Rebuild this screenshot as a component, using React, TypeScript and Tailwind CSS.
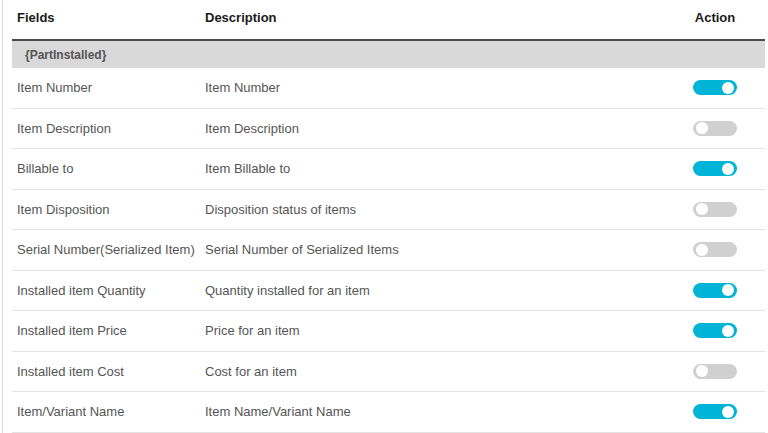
import { useState } from 'react'

type Row = { field: string; description: string; on: boolean }

const ROWS: Row[] = [
  { field: 'Item Number', description: 'Item Number', on: true },
  { field: 'Item Description', description: 'Item Description', on: false },
  { field: 'Billable to', description: 'Item Billable to', on: true },
  { field: 'Item Disposition', description: 'Disposition status of items', on: false },
  { field: 'Serial Number(Serialized Item)', description: 'Serial Number of Serialized Items', on: false },
  { field: 'Installed item Quantity', description: 'Quantity installed for an item', on: true },
  { field: 'Installed item Price', description: 'Price for an item', on: true },
  { field: 'Installed item Cost', description: 'Cost for an item', on: false },
  { field: 'Item/Variant Name', description: 'Item Name/Variant Name', on: true },
]

export default function App() {
  const [rows, setRows] = useState(ROWS)

  const toggle = (i: number) =>
    setRows((prev) => prev.map((r, j) => (j === i ? { ...r, on: !r.on } : r)))

  return (
    <div
      className="w-[768px] h-[433px] overflow-hidden bg-white pl-[2px]"
      style={{ fontFamily: '"Liberation Sans", Arial, sans-serif' }}
    >
      <div className="h-full border-l border-[#dcdcdc] pl-[9px] pr-[3px]">
        {/* Header */}
        <div className="flex items-center h-[41px] pb-[3px] border-b-2 border-[#4a4a4a] text-[13px] font-bold text-[#1a1a1a]">
          <div className="w-[188px] pl-[5px]">Fields</div>
          <div className="flex-1 pl-[5px]">Description</div>
          <div className="w-[100px] text-center">Action</div>
        </div>

        {/* Group */}
        <div className="flex items-center h-[27px] bg-[#d9d9d9] pl-[13px] text-[12px] font-bold text-[#555]">
          {'{PartInstalled}'}
        </div>

        {rows.map((row, i) => (
          <div
            key={row.field}
            className="flex items-center h-[40.5px] border-b border-[#e3e3e3] text-[13px] text-[#555]"
          >
            <div className="w-[188px] pl-[5px] whitespace-nowrap">{row.field}</div>
            <div className="flex-1 pl-[5px] whitespace-nowrap">{row.description}</div>
            <div className="w-[100px] flex justify-center">
              <button
                onClick={() => toggle(i)}
                className={`relative w-[44px] h-[15px] rounded-full ${row.on ? 'bg-[#00b4d8]' : 'bg-[#d0d0d0]'}`}
              >
                <span
                  className={`absolute top-[1.5px] w-[12px] h-[12px] rounded-full bg-white ${row.on ? 'right-[3px]' : 'left-[3px]'}`}
                />
              </button>
            </div>
          </div>
        ))}
      </div>
    </div>
  )
}
